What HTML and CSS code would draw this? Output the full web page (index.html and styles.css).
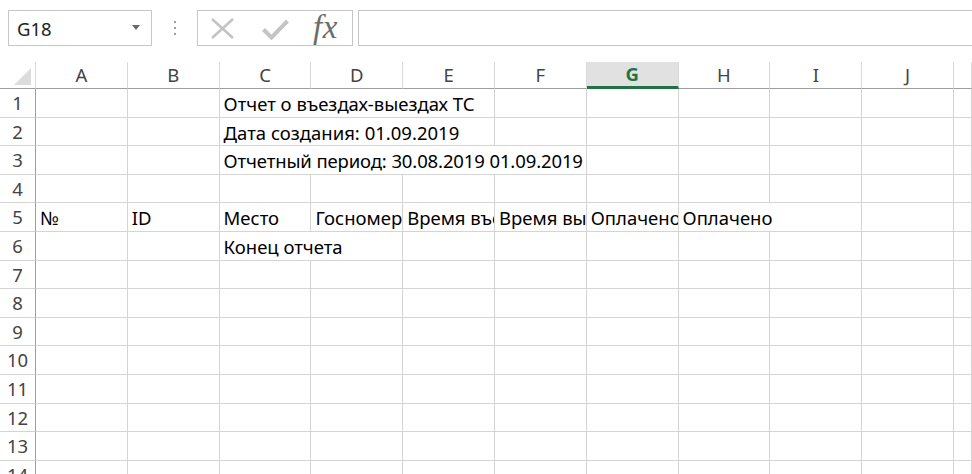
FILE: index.html
```html
<!DOCTYPE html>
<html lang="ru">
<head>
<meta charset="utf-8">
<title>Отчет о въездах-выездах ТС</title>
<link rel="stylesheet" href="styles.css">
</head>
<body>
<div class="formula-bar">
  <div class="name-box"><span class="name-text">G18</span><span class="dropdown"></span></div>
  <div class="separator"><span></span><span></span><span></span></div>
  <div class="fn-box">
    <svg class="icon-cancel" width="25" height="21" viewBox="0 0 25 21"><path d="M2 1 L23 20 M23 1 L2 20" stroke="#c4c4c4" stroke-width="2.6" fill="none"/></svg>
    <svg class="icon-enter" width="27" height="21" viewBox="0 0 27 21"><path d="M1.5 10.5 L9.5 18.5 L25.5 2" stroke="#c4c4c4" stroke-width="4" fill="none"/></svg>
    <span class="fx">fx</span>
  </div>
  <div class="formula-input"></div>
</div>

<div class="sheet">
  <div class="corner"><svg width="17" height="17" viewBox="0 0 17 17"><polygon points="17,0 17,17 0,17" fill="#dcdcdc"/></svg></div>
  <div class="colhead">A</div><div class="colhead">B</div><div class="colhead">C</div><div class="colhead">D</div><div class="colhead">E</div><div class="colhead">F</div><div class="colhead sel">G</div><div class="colhead">H</div><div class="colhead">I</div><div class="colhead">J</div><div class="colhead"></div>

  <div class="rowhead">1</div><div class="cell"></div><div class="cell"></div><div class="cell span3">Отчет о въездах-выездах ТС</div><div class="cell"></div><div class="cell"></div><div class="cell"></div><div class="cell"></div><div class="cell"></div><div class="cell"></div>

  <div class="rowhead">2</div><div class="cell"></div><div class="cell"></div><div class="cell span3">Дата создания: 01.09.2019</div><div class="cell"></div><div class="cell"></div><div class="cell"></div><div class="cell"></div><div class="cell"></div><div class="cell"></div>

  <div class="rowhead">3</div><div class="cell"></div><div class="cell"></div><div class="cell span4 tight">Отчетный период: 30.08.2019 01.09.2019</div><div class="cell"></div><div class="cell"></div><div class="cell"></div><div class="cell"></div><div class="cell"></div>

  <div class="rowhead">4</div><div class="cell"></div><div class="cell"></div><div class="cell"></div><div class="cell"></div><div class="cell"></div><div class="cell"></div><div class="cell"></div><div class="cell"></div><div class="cell"></div><div class="cell"></div><div class="cell"></div>

  <div class="rowhead">5</div><div class="cell">№</div><div class="cell">ID</div><div class="cell">Место</div><div class="cell">Госномер</div><div class="cell">Время въезда</div><div class="cell">Время выезда</div><div class="cell">Оплачено</div><div class="cell span2">Оплачено</div><div class="cell"></div><div class="cell"></div>

  <div class="rowhead">6</div><div class="cell"></div><div class="cell"></div><div class="cell span2">Конец отчета</div><div class="cell"></div><div class="cell"></div><div class="cell"></div><div class="cell"></div><div class="cell"></div><div class="cell"></div><div class="cell"></div>

  <div class="rowhead">7</div><div class="cell"></div><div class="cell"></div><div class="cell"></div><div class="cell"></div><div class="cell"></div><div class="cell"></div><div class="cell"></div><div class="cell"></div><div class="cell"></div><div class="cell"></div><div class="cell"></div>
  <div class="rowhead">8</div><div class="cell"></div><div class="cell"></div><div class="cell"></div><div class="cell"></div><div class="cell"></div><div class="cell"></div><div class="cell"></div><div class="cell"></div><div class="cell"></div><div class="cell"></div><div class="cell"></div>
  <div class="rowhead">9</div><div class="cell"></div><div class="cell"></div><div class="cell"></div><div class="cell"></div><div class="cell"></div><div class="cell"></div><div class="cell"></div><div class="cell"></div><div class="cell"></div><div class="cell"></div><div class="cell"></div>
  <div class="rowhead">10</div><div class="cell"></div><div class="cell"></div><div class="cell"></div><div class="cell"></div><div class="cell"></div><div class="cell"></div><div class="cell"></div><div class="cell"></div><div class="cell"></div><div class="cell"></div><div class="cell"></div>
  <div class="rowhead">11</div><div class="cell"></div><div class="cell"></div><div class="cell"></div><div class="cell"></div><div class="cell"></div><div class="cell"></div><div class="cell"></div><div class="cell"></div><div class="cell"></div><div class="cell"></div><div class="cell"></div>
  <div class="rowhead">12</div><div class="cell"></div><div class="cell"></div><div class="cell"></div><div class="cell"></div><div class="cell"></div><div class="cell"></div><div class="cell"></div><div class="cell"></div><div class="cell"></div><div class="cell"></div><div class="cell"></div>
  <div class="rowhead">13</div><div class="cell"></div><div class="cell"></div><div class="cell"></div><div class="cell"></div><div class="cell"></div><div class="cell"></div><div class="cell"></div><div class="cell"></div><div class="cell"></div><div class="cell"></div><div class="cell"></div>
  <div class="rowhead">14</div><div class="cell"></div><div class="cell"></div><div class="cell"></div><div class="cell"></div><div class="cell"></div><div class="cell"></div><div class="cell"></div><div class="cell"></div><div class="cell"></div><div class="cell"></div><div class="cell"></div>
</div>
</body>
</html>
```

FILE: styles.css
```css
* { box-sizing: border-box; }

html, body {
  margin: 0;
  height: 100%;
  overflow: hidden;
  background: #ffffff;
}

body {
  font-family: "Noto Sans", "DejaVu Sans", sans-serif;
  font-size: 18.5px;
  color: #000000;
}

/* ---------- formula bar ---------- */
.formula-bar {
  display: flex;
  align-items: flex-start;
  height: 62px;
  padding: 10px 0 0 8px;
}

.name-box {
  width: 144px;
  height: 36px;
  border: 1px solid #c6c6c6;
  display: flex;
  align-items: center;
  justify-content: space-between;
  padding: 1px 11px 0 8px;
  color: #222222;
  line-height: 24px;
}

.dropdown {
  width: 0;
  height: 0;
  border-left: 4px solid transparent;
  border-right: 4px solid transparent;
  border-top: 5px solid #6a6a6a;
  margin-top: -2px;
}

.separator {
  width: 45px;
  height: 36px;
  display: flex;
  flex-direction: column;
  align-items: center;
  justify-content: center;
  gap: 4px;
}

.separator span {
  width: 2px;
  height: 2px;
  background: #a0a0a0;
}

.fn-box {
  width: 156px;
  height: 36px;
  border: 1px solid #c6c6c6;
  display: flex;
  align-items: center;
  padding-left: 12px;
}

.icon-enter { margin-left: 27px; margin-top: 3px; }

.fx {
  margin-left: 24px;
  font-family: "Liberation Serif", "DejaVu Serif", serif;
  font-style: italic;
  font-size: 33px;
  line-height: 30px;
  color: #6c6c6c;
  letter-spacing: 0.5px;
  margin-top: -2px;
}

.formula-input {
  flex: 1;
  height: 36px;
  margin-left: 5px;
  border: 1px solid #c6c6c6;
  border-right: none;
}

/* ---------- sheet ---------- */
.sheet {
  display: grid;
  grid-template-columns: 36px repeat(10, 91.8px) 1fr;
  grid-template-rows: 27px;
  grid-auto-rows: 28.6px;
}

.corner {
  border-right: 1px solid #dadada;
  border-bottom: 1px solid #9e9e9e;
  display: flex;
  justify-content: flex-end;
  align-items: flex-end;
  padding: 0 4px 3px 0;
}

.colhead {
  border-right: 1px solid #dadada;
  border-bottom: 1px solid #9e9e9e;
  text-align: center;
  line-height: 26px;
  color: #444444;
}

.colhead.sel {
  background: #e1e1e1;
  border-bottom: 3px solid #217346;
  color: #217346;
  font-weight: bold;
  line-height: 24px;
}

.rowhead {
  border-right: 1px solid #9e9e9e;
  border-bottom: 1px solid #d4d4d4;
  text-align: center;
  line-height: 28px;
  color: #444444;
}

.cell {
  border-right: 1px solid #d4d4d4;
  border-bottom: 1px solid #d4d4d4;
  padding: 2px 0 0 4px;
  line-height: 26px;
  white-space: nowrap;
  overflow: hidden;
}

.tight { letter-spacing: -0.12px; }

.span2 { grid-column: span 2; }
.span3 { grid-column: span 3; }
.span4 { grid-column: span 4; }
```
